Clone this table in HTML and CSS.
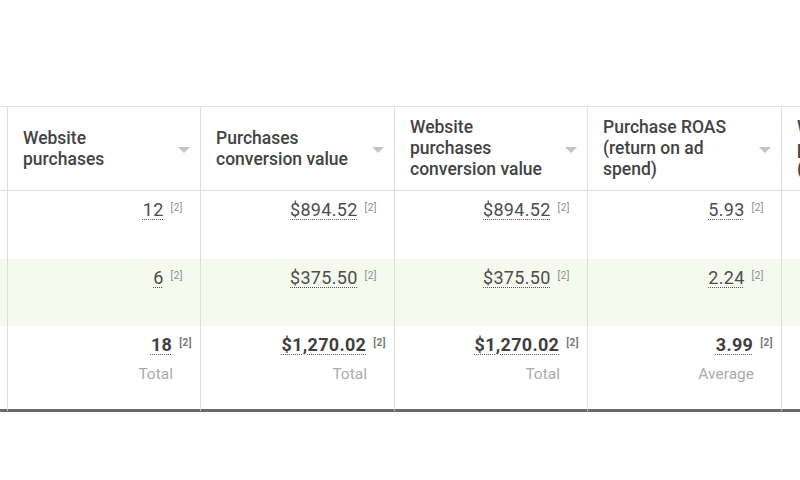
FILE: index.html
```html
<!DOCTYPE html>
<html>
<head>
<meta charset="utf-8">
<link rel="stylesheet" href="styles.css">
</head>
<body>
<div class="viewport">
  <div class="grid">
    <div class="cell head stub"></div>
    <div class="cell head"><span class="title">Website<br>purchases</span><span class="caret"></span></div>
    <div class="cell head"><span class="title">Purchases<br>conversion value</span><span class="caret"></span></div>
    <div class="cell head"><span class="title">Website<br>purchases<br>conversion value</span><span class="caret"></span></div>
    <div class="cell head"><span class="title">Purchase ROAS<br>(return on ad<br>spend)</span><span class="caret"></span></div>
    <div class="cell head last"><span class="title">Website<br>purchase ROAS<br>(return on ad spend)</span></div>

    <div class="cell stub"></div>
    <div class="cell num"><span class="val">12</span><span class="fn">[2]</span></div>
    <div class="cell num"><span class="val">$894.52</span><span class="fn">[2]</span></div>
    <div class="cell num"><span class="val">$894.52</span><span class="fn">[2]</span></div>
    <div class="cell num"><span class="val">5.93</span><span class="fn">[2]</span></div>
    <div class="cell last"></div>

    <div class="cell stub alt"></div>
    <div class="cell num alt"><span class="val">6</span><span class="fn">[2]</span></div>
    <div class="cell num alt"><span class="val">$375.50</span><span class="fn">[2]</span></div>
    <div class="cell num alt"><span class="val">$375.50</span><span class="fn">[2]</span></div>
    <div class="cell num alt"><span class="val">2.24</span><span class="fn">[2]</span></div>
    <div class="cell last alt"></div>

    <div class="cell stub foot"></div>
    <div class="cell total foot"><div class="line"><span class="val">18</span><span class="fn">[2]</span></div><span class="label">Total</span></div>
    <div class="cell total foot"><div class="line"><span class="val">$1,270.02</span><span class="fn">[2]</span></div><span class="label">Total</span></div>
    <div class="cell total foot"><div class="line"><span class="val">$1,270.02</span><span class="fn">[2]</span></div><span class="label">Total</span></div>
    <div class="cell total foot"><div class="line"><span class="val">3.99</span><span class="fn">[2]</span></div><span class="label">Average</span></div>
    <div class="cell last foot"></div>
  </div>
</div>
</body>
</html>
```

FILE: styles.css
```css
html, body {
  margin: 0;
  padding: 0;
  background: #ffffff;
}

body {
  font-family: Roboto, "Liberation Sans", Arial, sans-serif;
  color: #4a4a4a;
}

.viewport {
  width: 800px;
  height: 480px;
  overflow: hidden;
  padding-top: 106px;
  box-sizing: border-box;
}

.grid {
  display: grid;
  grid-template-columns: 8px 193px 194px 193px 194px 220px;
  grid-template-rows: 84px 68px 67px 86px;
  width: 1002px;
  border-top: 1px solid #e3e3e3;
}

.cell {
  box-sizing: border-box;
  border-right: 1px solid #dedede;
  background: #ffffff;
}

.head {
  display: flex;
  align-items: center;
  justify-content: space-between;
  padding: 0 10px 0 15px;
  border-bottom: 1px solid #dedede;
}

.head.stub {
  padding: 0;
}

.title {
  font-size: 17.5px;
  font-weight: 500;
  line-height: 21px;
  color: #434343;
  white-space: nowrap;
}

.caret {
  width: 0;
  height: 0;
  border-left: 6px solid transparent;
  border-right: 6px solid transparent;
  border-top: 6px solid #c4c4c4;
  margin-top: 3px;
}

.alt {
  background: #f5f9ee;
}

.num {
  display: flex;
  justify-content: flex-end;
  align-items: flex-start;
  padding: 9px 17px 0 0;
}

.val {
  font-size: 18px;
  line-height: 20px;
  color: #4d4d4d;
  letter-spacing: 0.3px;
  text-decoration: underline dotted #555;
  text-underline-offset: 3px;
  text-decoration-thickness: 1px;
}

.fn {
  font-size: 10px;
  line-height: 12px;
  color: #8c8c8c;
  margin-left: 7px;
  margin-top: 2px;
  letter-spacing: 0.5px;
}

.foot {
  border-bottom: 3px solid #6a6a6a;
}

.total {
  display: flex;
  flex-direction: column;
  align-items: flex-end;
  padding: 9px 8px 0 0;
}

.line {
  display: flex;
  align-items: flex-start;
}

.total .val {
  font-weight: 700;
  color: #3f3f3f;
}

.total .fn {
  font-weight: 700;
  color: #777;
  margin-left: 7px;
}

.label {
  font-size: 15.5px;
  line-height: 18px;
  color: #ababab;
  margin-top: 10px;
  margin-right: 19px;
}
```
